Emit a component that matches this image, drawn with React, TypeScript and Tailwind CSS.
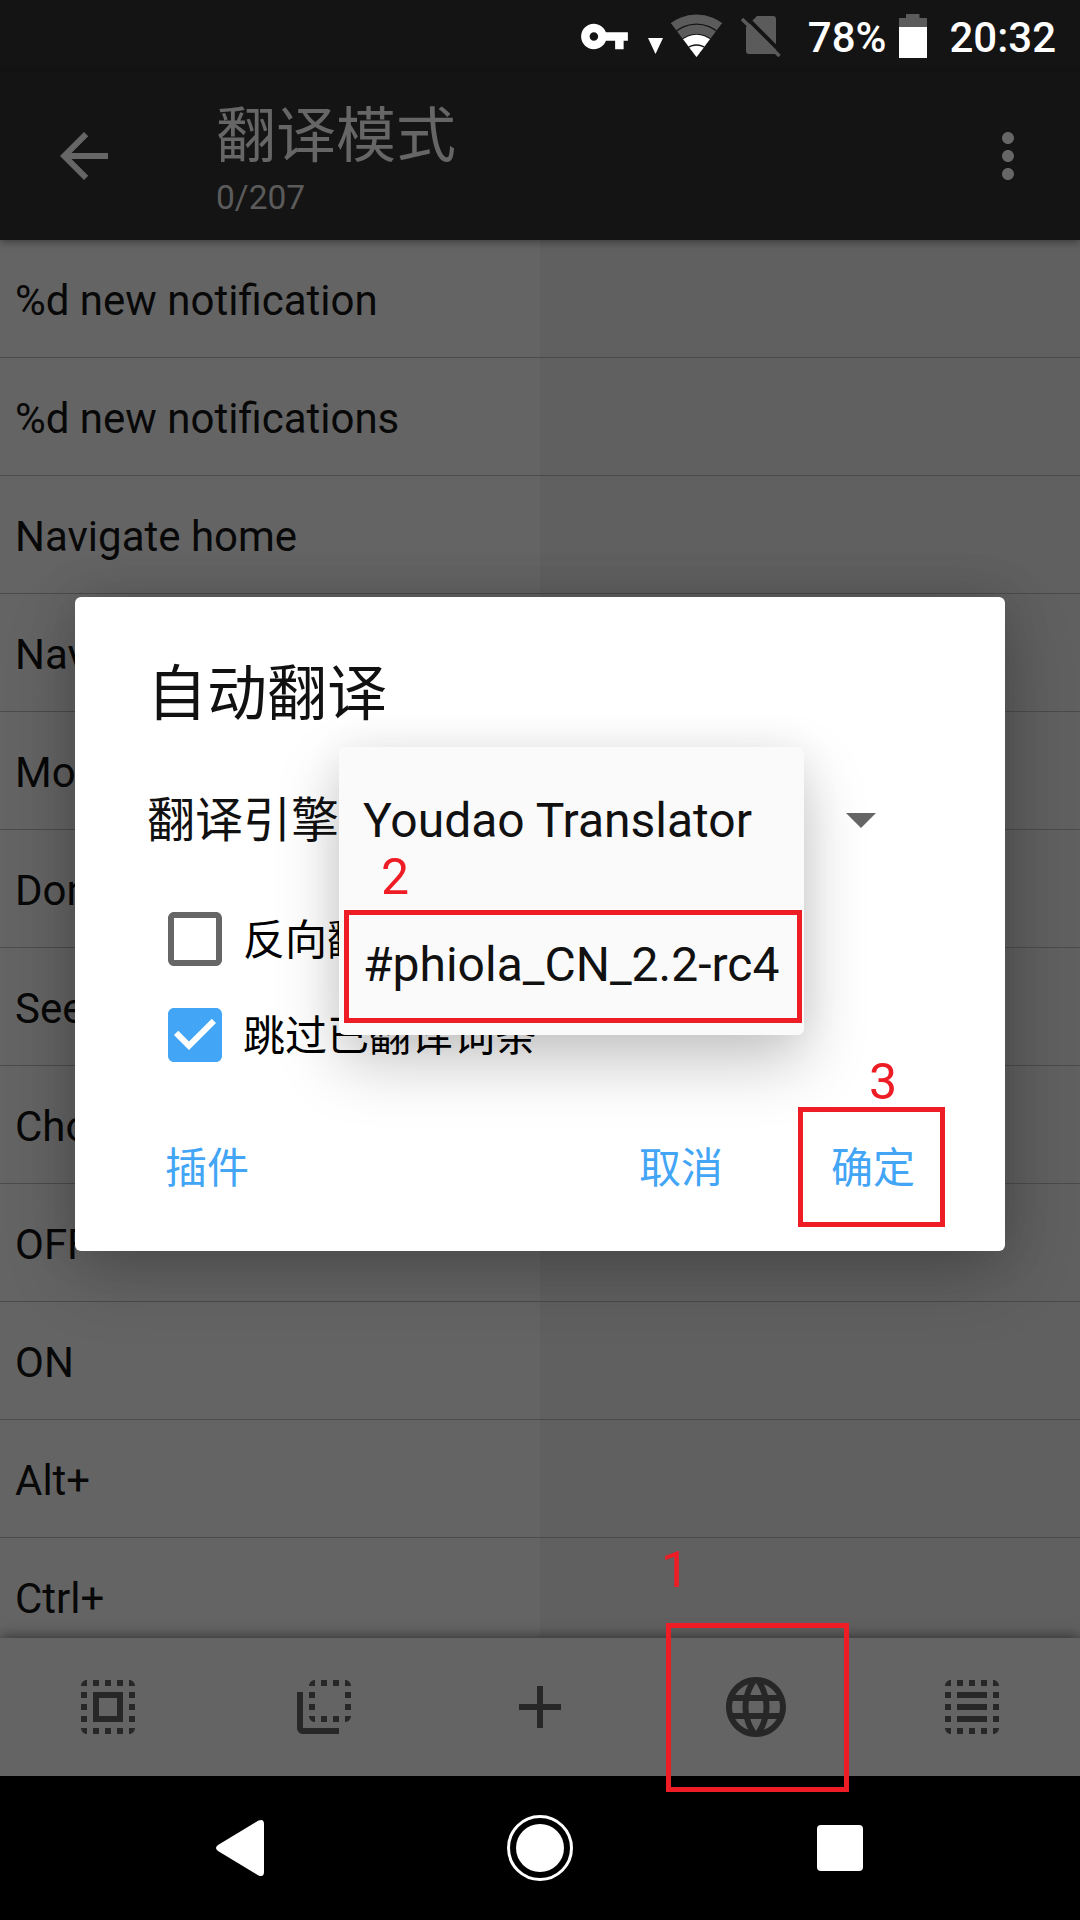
import React from "react";

const rows = [
  "%d new notification",
  "%d new notifications",
  "Navigate home",
  "Navigate up",
  "More options",
  "Done",
  "See all",
  "Choose an app",
  "OFF",
  "ON",
  "Alt+",
  "Ctrl+",
];

function Icon({ d, className }: { d: string; className: string }) {
  return (
    <svg viewBox="0 0 24 24" fill="currentColor" className={className}>
      <path d={d} />
    </svg>
  );
}

const ICONS = {
  key: "M12.65 10C11.83 7.67 9.61 6 7 6c-3.31 0-6 2.69-6 6s2.69 6 6 6c2.61 0 4.83-1.67 5.65-4H17v4h4v-4h2v-4H12.65zM7 14c-1.1 0-2-.9-2-2s.9-2 2-2 2 .9 2 2-.9 2-2 2z",
  back: "M20 11H7.83l5.59-5.59L12 4l-8 8 8 8 1.41-1.41L7.83 13H20v-2z",
  more: "M12 8c1.1 0 2-.9 2-2s-.9-2-2-2-2 .9-2 2 .9 2 2 2zm0 2c-1.1 0-2 .9-2 2s.9 2 2 2 2-.9 2-2-.9-2-2-2zm0 6c-1.1 0-2 .9-2 2s.9 2 2 2 2-.9 2-2-.9-2-2-2z",
  selectAll:
    "M3 5h2V3c-1.1 0-2 .9-2 2zm0 8h2v-2H3v2zm4 8h2v-2H7v2zM3 9h2V7H3v2zm10-6h-2v2h2V3zm6 0v2h2c0-1.1-.9-2-2-2zM5 21v-2H3c0 1.1.9 2 2 2zm-2-4h2v-2H3v2zM9 3H7v2h2V3zm2 18h2v-2h-2v2zm8-8h2v-2h-2v2zm0 8c1.1 0 2-.9 2-2h-2v2zm0-12h2V7h-2v2zm0 8h2v-2h-2v2zm-4 4h2v-2h-2v2zm0-16h2V3h-2v2zM7 17h10V7H7v10zm2-8h6v6H9V9z",
  flip: "M9 7H7v2h2V7zm0 4H7v2h2v-2zm0-8c-1.11 0-2 .9-2 2h2V3zm4 12h-2v2h2v-2zm6-12v2h2c0-1.1-.9-2-2-2zm-6 0h-2v2h2V3zM9 17v-2H7c0 1.1.89 2 2 2zm10-4h2v-2h-2v2zm0-4h2V7h-2v2zm0 8c1.1 0 2-.9 2-2h-2v2zM5 7H3v12c0 1.1.89 2 2 2h12v-2H5V7zm10-2h2V3h-2v2zm0 12h2v-2h-2v2z",
  add: "M19 13h-6v6h-2v-6H5v-2h6V5h2v6h6v2z",
  globe:
    "M11.99 2C6.47 2 2 6.48 2 12s4.47 10 9.99 10C17.52 22 22 17.52 22 12S17.52 2 11.99 2zm6.93 6h-2.95c-.32-1.25-.78-2.45-1.38-3.56 1.84.63 3.37 1.91 4.33 3.56zM12 4.04c.83 1.2 1.48 2.53 1.91 3.96h-3.82c.43-1.43 1.08-2.76 1.91-3.96zM4.26 14C4.1 13.36 4 12.69 4 12s.1-1.36.26-2h3.38c-.08.66-.14 1.32-.14 2 0 .68.06 1.34.14 2H4.26zm.82 2h2.95c.32 1.25.78 2.45 1.38 3.56-1.84-.63-3.37-1.9-4.33-3.56zm2.95-8H5.08c.96-1.66 2.49-2.93 4.33-3.56C8.81 5.55 8.35 6.75 8.03 8zM12 19.96c-.83-1.2-1.48-2.53-1.91-3.96h3.82c-.43 1.43-1.08 2.76-1.91 3.96zM14.34 14H9.66c-.09-.66-.16-1.32-.16-2 0-.68.07-1.35.16-2h4.68c.09.65.16 1.32.16 2 0 .68-.07 1.34-.16 2zm.25 5.56c.6-1.11 1.06-2.31 1.38-3.56h2.95c-.96 1.65-2.49 2.93-4.33 3.56zM16.36 14c.08-.66.14-1.32.14-2 0-.68-.06-1.34-.14-2h3.38c.16.64.26 1.31.26 2s-.1 1.36-.26 2h-3.38z",
  selectLines:
    "M3 5h2V3c-1.1 0-2 .9-2 2zm0 8h2v-2H3v2zm4 8h2v-2H7v2zM3 9h2V7H3v2zm10-6h-2v2h2V3zm6 0v2h2c0-1.1-.9-2-2-2zM5 21v-2H3c0 1.1.9 2 2 2zm-2-4h2v-2H3v2zM9 3H7v2h2V3zm2 18h2v-2h-2v2zm8-8h2v-2h-2v2zm0 8c1.1 0 2-.9 2-2h-2v2zm0-12h2V7h-2v2zm0 8h2v-2h-2v2zm-4 4h2v-2h-2v2zm0-16h2V3h-2v2zM7 7h10v2H7zM7 11h10v2H7zM7 15h10v2H7z",
  boxOff: "M19 5v14H5V5h14m0-2H5c-1.1 0-2 .9-2 2v14c0 1.1.9 2 2 2h14c1.1 0 2-.9 2-2V5c0-1.1-.9-2-2-2z",
  boxOn: "M19 3H5c-1.11 0-2 .9-2 2v14c0 1.1.89 2 2 2h14c1.11 0 2-.9 2-2V5c0-1.1-.89-2-2-2zm-9 14l-5-5 1.41-1.41L10 14.17l7.59-7.59L19 8l-9 9z",
};

function StatusBar() {
  return (
    <div className="flex h-[72px] shrink-0 items-center justify-end pr-[24px] text-[42px] font-medium text-white">
      <Icon d={ICONS.key} className="mr-[18px] size-[51px]" />
      <svg viewBox="0 0 15 16" className="mt-[20px] mr-[8px] h-[16px] w-[15px]" fill="white">
        <path d="M0 0h15L7.5 16z" />
      </svg>
      <svg viewBox="0 0 51 44" className="mr-[19px] h-[44px] w-[51px]">
        <clipPath id="fan">
          <path d="M25.5 43L-7 0V-10H58V0z" />
        </clipPath>
        <g clipPath="url(#fan)">
          <circle cx="25.5" cy="43" r="42.500" fill="#5b5b5b" />
          <circle cx="25.5" cy="43" r="33.600" fill="#141414" />
          <circle cx="25.5" cy="43" r="32.200" fill="#5b5b5b" />
          <circle cx="25.5" cy="43" r="23.200" fill="#141414" />
          <circle cx="25.5" cy="43" r="22.200" fill="white" />
          <ellipse cx="25.5" cy="43" rx="14" ry="12.800" fill="#141414" />
          <ellipse cx="25.5" cy="43" rx="12.500" ry="11.200" fill="white" />
        </g>
      </svg>
      <svg viewBox="0 0 40 42" className="mr-[27px] h-[42px] w-[40px]">
        <path d="M16 1H32Q35 1 35 4V39H8Q5 39 5 36V12z" fill="#5b5b5b" />
        <path d="M3 0L42 39" stroke="#141414" strokeWidth="4" />
        <path d="M1 4L38.500 41" stroke="#5b5b5b" strokeWidth="3.500" />
      </svg>
      <span className="relative top-px">78%</span>
      <svg viewBox="0 0 28 44" className="mr-[22px] ml-[13px] h-[44px] w-[28px]">
        <path d="M7 0H20.500V4H28V13H0V4H7z" fill="#5b5b5b" />
        <path d="M0 13H28V44H0z" fill="white" />
      </svg>
      <span className="relative top-px">20:32</span>
    </div>
  );
}

function Dialog() {
  return (
    <section className="absolute top-[597px] left-[75px] h-[654px] w-[930px] rounded-[6px] bg-white text-[#111] shadow-[0_24px_72px_rgba(0,0,0,0.2),0_0_48px_rgba(0,0,0,0.13)]">
      <h2 className="mt-[54px] ml-[72px] text-[60px] leading-[88px]">自动翻译</h2>
      <div className="mt-[45px] flex h-[72px] items-center pr-[129px] pl-[72px]">
        <span className="pt-[2px] text-[48px] leading-[72px]">翻译引擎</span>
        <svg viewBox="0 0 30 15" className="ml-auto h-[15px] w-[30px]" fill="#666">
          <path d="M0 0h30L15 15z" />
        </svg>
      </div>
      <div className="mt-[47px] ml-[84px] flex flex-col gap-[24px] text-[42px] leading-[72px] text-black">
        <label className="flex h-[72px] items-center gap-[12px]">
          <Icon d={ICONS.boxOff} className="size-[72px] text-[#666]" />
          <span className="pt-[4px]">反向翻译</span>
        </label>
        <label className="flex h-[72px] items-center gap-[12px]">
          <Icon d={ICONS.boxOn} className="size-[72px] text-[#42a5f5]" />
          <span className="pt-[4px]">跳过已翻译词条</span>
        </label>
      </div>
      <div className="mt-[62px] flex pr-[90px] pl-[90px] text-[42px] leading-[72px] text-[#42a5f5]">
        <span className="mr-auto">插件</span>
        <span className="mr-[108px]">取消</span>
        <span>确定</span>
      </div>
    </section>
  );
}

export default function App() {
  return (
    <div className="relative flex h-[1920px] w-[1080px] flex-col overflow-hidden bg-[#141414] font-['Roboto','Noto_Sans_CJK_SC',sans-serif]">
      <StatusBar />
      <header className="z-10 flex h-[168px] shrink-0 items-center bg-[#141414] pl-[48px] text-[#666] shadow-[0_2px_8px_rgba(0,0,0,0.4)]">
        <Icon d={ICONS.back} className="size-[72px]" />
        <div className="ml-[96px] flex flex-col">
          <h1 className="text-[60px] leading-[84px]">翻译模式</h1>
          <p className="text-[33.5px] leading-[38px] text-[#5b5b5b]">0/207</p>
        </div>
        <Icon d={ICONS.more} className="mr-[36px] ml-auto size-[72px]" />
      </header>

      <main className="flex min-h-0 flex-1 flex-col overflow-hidden">
        {rows.map((row) => (
          <div key={row} className="flex h-[118px] shrink-0 border-b border-[#4b4b4b]">
            <div className="flex w-1/2 items-center bg-[#646464] pt-[4px] pl-[15px] text-[42px] text-[#080808]">{row}</div>
            <div className="w-1/2 bg-[#606060]" />
          </div>
        ))}
      </main>

      <footer className="z-10 flex h-[138px] shrink-0 items-center bg-[#646464] text-[#272727] shadow-[0_0_14px_rgba(0,0,0,0.6)]">
        {[ICONS.selectAll, ICONS.flip, ICONS.add, ICONS.globe, ICONS.selectLines].map((d, i) => (
          <div key={i} className="flex flex-1 justify-center">
            <Icon d={d} className="size-[72px]" />
          </div>
        ))}
      </footer>

      <nav className="z-10 flex h-[144px] shrink-0 items-center justify-center bg-black">
        <svg viewBox="0 0 48 56" className="mr-[243px] h-[56px] w-[48px]" fill="white">
          <path d="M42.500 .6Q48 -1.500 48 4V52Q48 57.500 42.500 55.400L2 31Q-2 28 2 25z" />
        </svg>
        <svg viewBox="0 0 66 66" className="size-[66px]" fill="white">
          <circle cx="33" cy="33" r="31.500" fill="none" stroke="white" strokeWidth="3" />
          <circle cx="33" cy="33" r="24" />
        </svg>
        <div className="mr-[1px] ml-[244px] size-[46px] rounded-[4px] bg-white" />
      </nav>

      <div className="absolute inset-0 z-20">
        <Dialog />
        <ul className="absolute top-[747px] left-[339px] w-[465px] rounded-[6px] bg-[#fafafa] pt-[2px] pl-[24px] text-[48px] leading-[144px] text-[#111] shadow-[0_28px_64px_rgba(0,0,0,0.22),0_0_40px_rgba(0,0,0,0.06)]">
          <li className="h-[144px] whitespace-nowrap">Youdao Translator</li>
          <li className="h-[142px] whitespace-nowrap">#phiola_CN_2.2-rc4</li>
        </ul>
        <div className="absolute top-[910px] left-[344px] h-[113px] w-[458px] border-[5px] border-[#ee1c24]" />
        <div className="absolute top-[1107px] left-[798px] h-[120px] w-[147px] border-[5px] border-[#ee1c24]" />
        <div className="absolute top-[1623px] left-[666px] h-[169px] w-[183px] border-[5px] border-[#ee1c24]" />
        <span className="absolute top-[847px] left-[381px] text-[50px] leading-[60px] text-[#ee1c24]">2</span>
        <span className="absolute top-[1052px] left-[869px] text-[50px] leading-[60px] text-[#ee1c24]">3</span>
        <span className="absolute top-[1540px] left-[661px] text-[50px] leading-[60px] text-[#ee1c24]">1</span>
      </div>
    </div>
  );
}
